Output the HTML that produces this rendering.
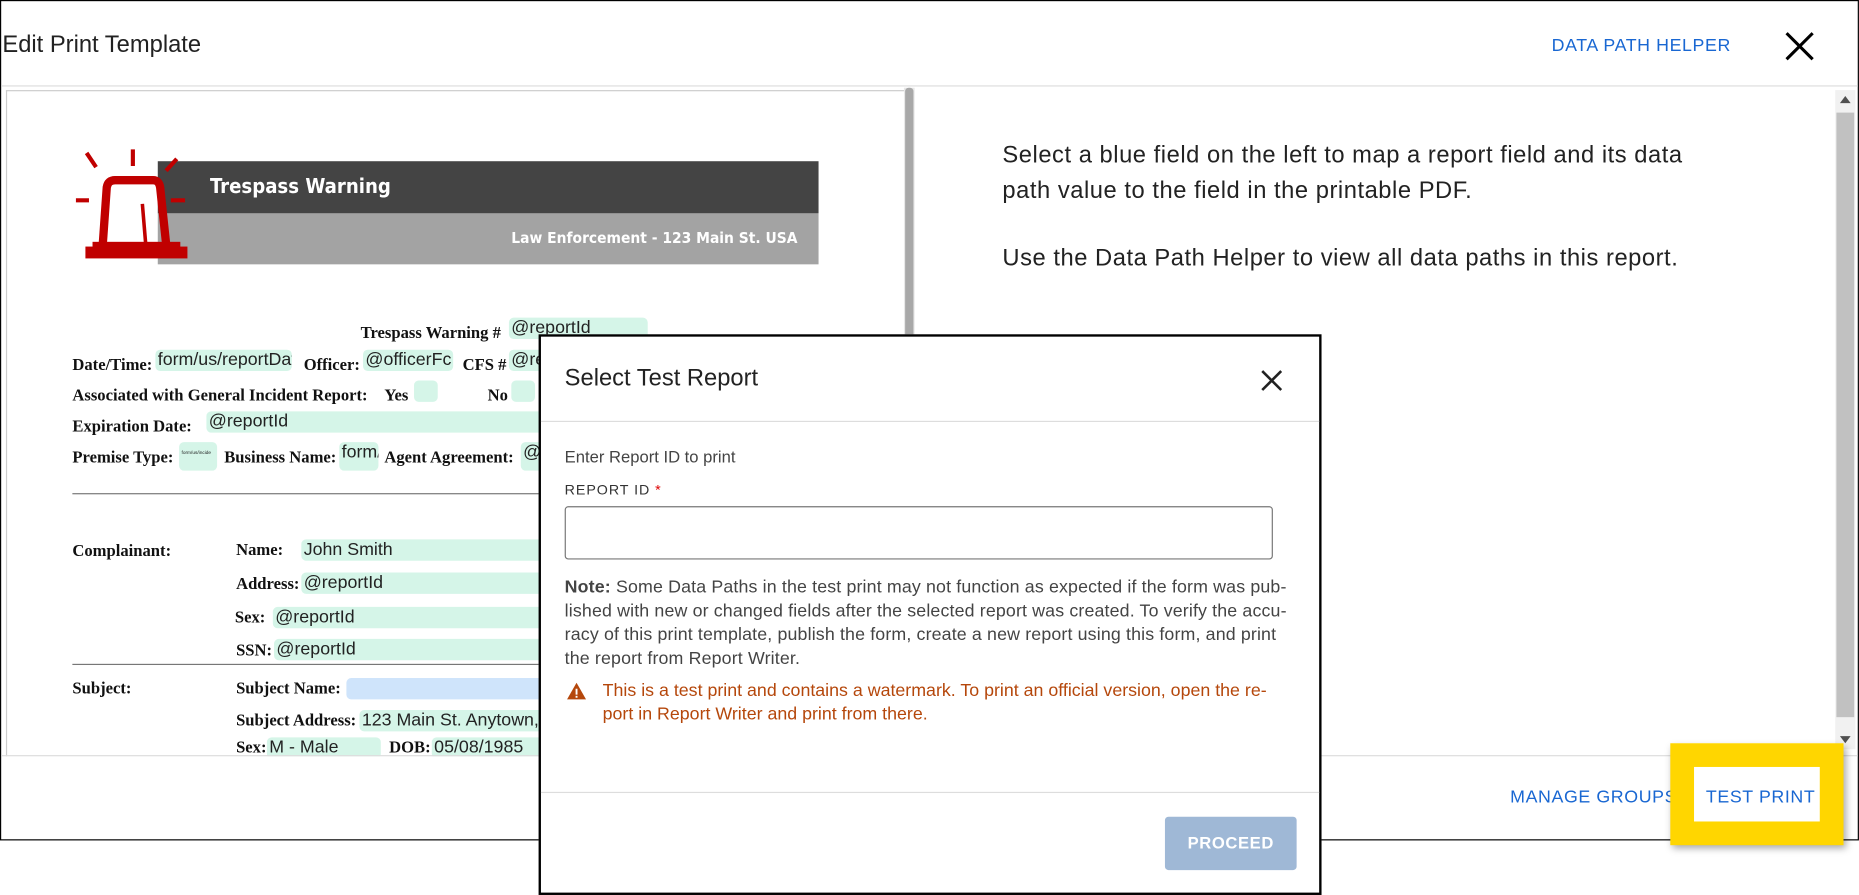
<!DOCTYPE html>
<html><head><style>
*{box-sizing:border-box;margin:0;padding:0}
html,body{width:1859px;height:895px;overflow:hidden;background:#fff}
#s{position:absolute;left:0;top:0;width:1567px;height:755px;transform:scale(1.1863,1.1854);transform-origin:0 0;font-family:"Liberation Sans",sans-serif}
.a{position:absolute}
.win{left:0;top:0;width:1567px;height:709px;border:1px solid #000;background:#fff}
.lbl{font-family:"Liberation Serif",serif;font-weight:bold;font-size:14px;color:#111;position:absolute;white-space:nowrap}
.f{position:absolute;background:#d5f5e8;border-radius:4px;font-size:15px;color:#222;white-space:nowrap;overflow:hidden;padding-left:2px;line-height:18px;height:18px}
.btn{color:#1967d2;font-size:15px;letter-spacing:.5px;position:absolute}
</style></head><body><div id="s">
<div class="a win"></div>
<div class="a" style="left:2px;top:27px;font-size:20px;color:#222">Edit Print Template</div>
<div class="btn" style="left:1308px;top:30px">DATA PATH HELPER</div>
<svg class="a" style="left:1504px;top:26px" width="26" height="26"><path d="M2 2L24 24M24 2L2 24" stroke="#000" stroke-width="2.6"/></svg>
<div class="a" style="left:1px;top:72px;width:1565px;height:1px;background:#ddd"></div>
<div class="a" style="left:5px;top:76px;width:758px;height:562px;border:1px solid #ccc;border-right:none;border-bottom:none;background:#fff;overflow:hidden">
<div class="a" style="left:127px;top:59px;width:557px;height:44px;background:#444"></div>
<div class="a" style="left:127px;top:103px;width:557px;height:43px;background:#a3a3a3"></div>
<svg class="a" style="left:55px;top:45px" width="105" height="100">
<g stroke="#c00000" fill="none">
<path d="M12 7L20 19M51 4V18M88 12L79 22M3 47H14M83 47H95" stroke-width="3.5"/>
<path d="M25 93L29 36Q30 30 36 30H68Q73 30 74 36L80 93" stroke-width="7"/>
<path d="M59 50L62 86" stroke-width="3"/>
</g>
<rect x="11" y="86" width="86" height="10" fill="#c00000"/>
<rect x="17" y="82" width="74" height="6" fill="#c00000"/>
</svg>
<div class="a" style="left:171px;top:71px;color:#fff;font-size:17px;font-weight:bold;font-family:'DejaVu Sans Condensed','DejaVu Sans',sans-serif">Trespass Warning</div>
<div class="a" style="left:425px;top:117px;color:#fff;font-size:13px;font-weight:bold;font-family:'DejaVu Sans Condensed','DejaVu Sans',sans-serif">Law Enforcement - 123 Main St. USA</div>
<div class="lbl" style="left:298px;top:197px">Trespass Warning #</div><div class="f" style="left:423px;top:191px;width:117px">@reportId</div>
<div class="lbl" style="left:55px;top:224px">Date/Time:</div><div class="f" style="left:125px;top:218px;width:115px">form/us/reportDat</div>
<div class="lbl" style="left:250px;top:224px">Officer:</div><div class="f" style="left:300px;top:218px;width:76px">@officerFc</div>
<div class="lbl" style="left:384px;top:224px">CFS #</div><div class="f" style="left:423px;top:218px;width:60px">@re</div>
<div class="lbl" style="left:55px;top:250px">Associated with General Incident Report:</div>
<div class="lbl" style="left:318px;top:250px">Yes</div><div class="f" style="left:343px;top:244px;width:20px"></div>
<div class="lbl" style="left:405px;top:250px">No</div><div class="f" style="left:425px;top:244px;width:20px"></div>
<div class="lbl" style="left:55px;top:276px">Expiration Date:</div><div class="f" style="left:168px;top:270px;width:300px">@reportId</div>
<div class="lbl" style="left:55px;top:302px">Premise Type:</div><div class="f" style="left:145px;top:296px;width:32px;height:24px;font-size:4px">form/us/incide</div>
<div class="lbl" style="left:183px;top:302px">Business Name:</div><div class="f" style="left:280px;top:296px;width:33px;height:24px">form/</div>
<div class="lbl" style="left:318px;top:302px">Agent Agreement:</div><div class="f" style="left:433px;top:296px;width:30px;height:24px">@</div>
<div class="a" style="left:55px;top:339px;width:420px;height:1px;background:#777"></div>
<div class="lbl" style="left:55px;top:381px">Complainant:</div>
<div class="lbl" style="left:193px;top:380px">Name:</div><div class="f" style="left:248px;top:378px;width:230px">John Smith</div>
<div class="lbl" style="left:193px;top:409px">Address:</div><div class="f" style="left:248px;top:406px;width:230px">@reportId</div>
<div class="lbl" style="left:192px;top:437px">Sex:</div><div class="f" style="left:224px;top:435px;width:250px">@reportId</div>
<div class="lbl" style="left:193px;top:465px">SSN:</div><div class="f" style="left:225px;top:462px;width:250px">@reportId</div>
<div class="a" style="left:55px;top:483px;width:420px;height:1px;background:#777"></div>
<div class="lbl" style="left:55px;top:497px">Subject:</div>
<div class="lbl" style="left:193px;top:497px">Subject Name:</div><div class="f" style="left:286px;top:495px;width:190px;background:#cfe4fb"></div>
<div class="lbl" style="left:193px;top:524px">Subject Address:</div><div class="f" style="left:297px;top:522px;width:180px">123 Main St. Anytown,</div>
<div class="lbl" style="left:193px;top:547px">Sex:</div><div class="f" style="left:219px;top:545px;width:96px">M - Male</div>
<div class="lbl" style="left:322px;top:547px">DOB:</div><div class="f" style="left:358px;top:545px;width:120px">05/08/1985</div>
</div>
<div class="a" style="left:762px;top:74px;width:9px;height:564px;background:#e8e8e8"></div>
<div class="a" style="left:763px;top:74px;width:7px;height:220px;background:#a8a8a8;border-radius:3px"></div>
<div class="a" style="left:845px;top:116px;font-size:20px;line-height:30px;color:#222;letter-spacing:.45px">Select a blue field on the left to map a report field and its data<br>path value to the field in the printable PDF.</div>
<div class="a" style="left:845px;top:207px;font-size:20px;color:#222;letter-spacing:.45px">Use the Data Path Helper to view all data paths in this report.</div>
<div class="a" style="left:1547px;top:76px;width:17px;height:556px;background:#f1f1f1"></div>
<div class="a" style="left:1548px;top:95px;width:15px;height:510px;background:#c1c1c1"></div>
<svg class="a" style="left:1550px;top:80px" width="11" height="8"><path d="M1 7L5.5 1L10 7Z" fill="#505050"/></svg>
<svg class="a" style="left:1550px;top:620px" width="11" height="8"><path d="M1 1L5.5 7L10 1Z" fill="#505050"/></svg>
<div class="a" style="left:1px;top:637px;width:1565px;height:1px;background:#ddd"></div>
<div class="btn" style="left:1273px;top:664px">MANAGE GROUPS</div>
<div class="a" style="left:1408px;top:627px;width:146px;height:86px;border:20px solid #ffd600;box-shadow:2px 3px 6px rgba(0,0,0,.35)"></div>
<div class="btn" style="left:1438px;top:664px">TEST PRINT</div>
<div class="a" style="left:454px;top:282px;width:660px;height:473px;border:2px solid #000;background:#fff">
<div class="a" style="left:20px;top:24px;font-size:20px;color:#222">Select Test Report</div>
<svg class="a" style="left:606px;top:27px" width="20" height="20"><path d="M2 2L18 18M18 2L2 18" stroke="#222" stroke-width="2.2"/></svg>
<div class="a" style="left:0;top:71px;width:656px;height:1px;background:#ddd"></div>
<div class="a" style="left:20px;top:93px;font-size:14px;color:#444">Enter Report ID to print</div>
<div class="a" style="left:20px;top:122px;font-size:12px;letter-spacing:.8px;color:#333">REPORT ID <span style="color:#d00">*</span></div>
<div class="a" style="left:20px;top:143px;width:597px;height:45px;border:1px solid #777;border-radius:3px"></div>
<div class="a" style="left:20px;top:202px;width:640px;font-size:15px;line-height:20px;color:#444;letter-spacing:.12px;white-space:nowrap"><b>Note:</b> Some Data Paths in the test print may not function as expected if the form was pub-<br>lished with new or changed fields after the selected report was created. To verify the accu-<br>racy of this print template, publish the form, create a new report using this form, and print<br>the report from Report Writer.</div>
<svg class="a" style="left:21px;top:291px" width="18" height="16"><path d="M9 1L17 15H1Z" fill="#b5470b"/><rect x="8.2" y="6" width="1.6" height="5" fill="#fff"/><rect x="8.2" y="12" width="1.6" height="1.6" fill="#fff"/></svg>
<div class="a" style="left:52px;top:289px;font-size:15px;line-height:20px;color:#b5470b;letter-spacing:0;white-space:nowrap">This is a test print and contains a watermark. To print an official version, open the re-<br>port in Report Writer and print from there.</div>
<div class="a" style="left:0;top:384px;width:656px;height:1px;background:#ddd"></div>
<div class="a" style="left:526px;top:405px;width:111px;height:45px;background:#9fb8d6;border-radius:3px;color:#fff;font-size:14px;font-weight:bold;letter-spacing:.5px;text-align:center;line-height:45px">PROCEED</div>
</div>
</div></body></html>
